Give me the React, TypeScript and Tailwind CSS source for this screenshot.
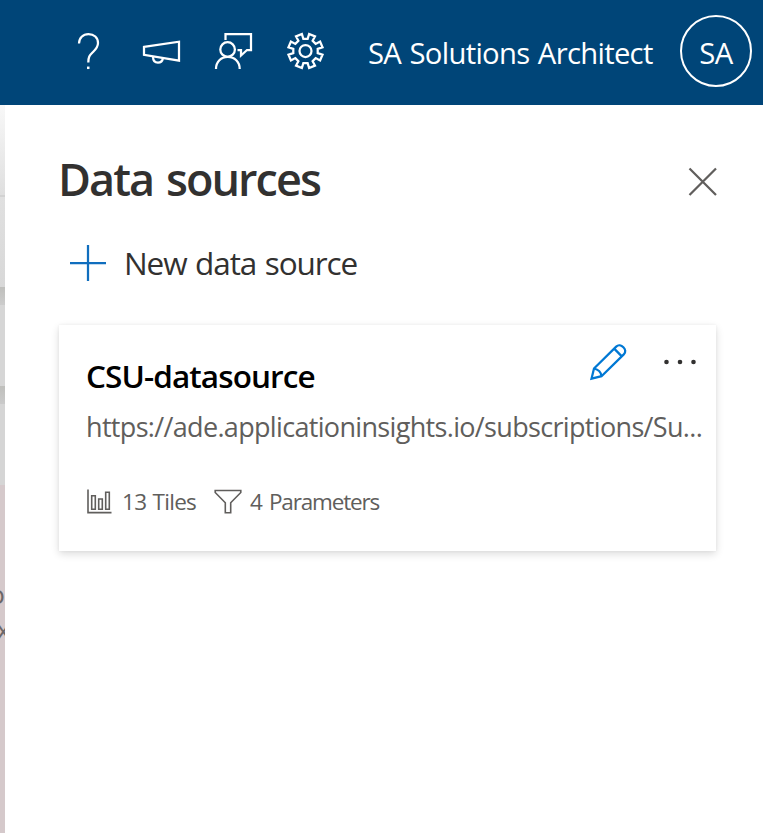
import React from "react";

function gearPath(cx: number, cy: number) {
  const pts: string[] = [];
  for (let i = 0; i < 8; i++) {
    const base = 22.5 + i * 45;
    const corners: [number, number][] = [
      [-12.5, 12.4],
      [-10.5, 17.4],
      [10.5, 17.4],
      [12.5, 12.4],
    ];
    for (const [offset, radius] of corners) {
      const a = ((base + offset) * Math.PI) / 180;
      pts.push(`${(cx + radius * Math.cos(a)).toFixed(2)} ${(cy + radius * Math.sin(a)).toFixed(2)}`);
    }
  }
  return `M${pts.join("L")}Z`;
}

function HelpIcon() {
  return (
    <svg width="24" height="40" viewBox="77 31 24 40" fill="none" stroke="white" strokeWidth="2.25">
      <path d="M79 43.5C79 38 83 34 88.500 34C94 34 98 37.800 98 43C98 47.500 95.500 49.600 92.500 52.500C89.500 55.300 88.300 57 88.300 62.500" />
      <path d="M87 67.800H89.500" strokeWidth="2.500" />
    </svg>
  );
}

function MegaphoneIcon() {
  return (
    <svg width="40" height="40" viewBox="142 31 40 40" fill="none" stroke="white" strokeWidth="2.25">
      <path d="M144 46.900L179 41.700V60.700L144 54.800Z" />
      <path d="M153 56.500C153 60.300 155 62.700 158 62.700C160.800 62.700 162.500 60.800 163 58" />
    </svg>
  );
}

function FeedbackIcon() {
  return (
    <svg width="40" height="40" viewBox="214 31 40 40" fill="none" stroke="white" strokeWidth="2.25">
      <path d="M225.500 40V34H251V50H247L241 55.500V50H237.500" />
      <circle cx="227.600" cy="49.500" r="7.300" />
      <path d="M216 69C216 61.800 221 57 227.800 57C234.600 57 239.700 61.800 239.700 69" />
    </svg>
  );
}

function SettingsIcon() {
  return (
    <svg width="40" height="40" viewBox="286 31 40 40" fill="none" stroke="white" strokeWidth="2.25">
      <path d={gearPath(305.500, 51)} />
      <circle cx="305.500" cy="51" r="6" />
    </svg>
  );
}

function PencilIcon() {
  return (
    <svg width="38" height="38" viewBox="589 343 38 38" fill="none" stroke="#0078d4" strokeWidth="2.25">
      <path d="M591.500 378.700L594 368.500L616.200 346.600C620.500 342.300 628.500 350 623.800 354.400L601.500 376.200Z" />
      <path d="M594 368.500C598.500 369.500 601 372 601.500 376.200M614.200 348.600L621.800 356.400" />
    </svg>
  );
}

function ChartIcon() {
  return (
    <svg width="26" height="26" viewBox="86 489 26 26" fill="none" stroke="#605e5c" strokeWidth="1.600">
      <path d="M88 489.500V512.600H111.500" />
      <path d="M91.700 495.700H95.300V509.300H91.700ZM98.700 499H102.300V509.300H98.700ZM105.700 492.200H109.300V509.300H105.700Z" />
    </svg>
  );
}

function FilterIcon() {
  return (
    <svg width="28" height="26" viewBox="214 489 28 26" fill="none" stroke="#605e5c" strokeWidth="1.600">
      <path d="M215.200 490.500H240.800V492.500L230.700 502.800V512.700H225.300V502.800L215.200 492.500Z" />
    </svg>
  );
}

function TopBar() {
  return (
    <header className="flex h-[105px] shrink-0 items-start bg-[#004578] text-white">
      <div className="ml-[77px] mt-[31px] flex">
        <HelpIcon />
        <div className="ml-[41px]"><MegaphoneIcon /></div>
        <div className="ml-8"><FeedbackIcon /></div>
        <div className="ml-8"><SettingsIcon /></div>
      </div>
      <span className="ml-[42px] mt-[33px] w-[286px] whitespace-nowrap text-[29.25px] leading-[40px] tracking-[-0.7px] [word-spacing:1.5px]">
        SA Solutions Architect
      </span>
      <div className="ml-[26px] mt-[15px] flex size-[72px] shrink-0 items-center justify-center rounded-full border-2 border-white pt-1.5 text-[29.25px] tracking-[-0.5px]">
        SA
      </div>
    </header>
  );
}

function PageBehind() {
  return (
    <aside className="flex w-[5px] shrink-0 flex-col overflow-hidden bg-[#d5c9cb] text-[#6b6769]">
      <div className="h-[90px] shrink-0 bg-linear-to-b from-[#f8f8f8] to-[#dfdfdf]" />
      <div className="h-[2px] shrink-0 bg-[#d2d2d2]" />
      <div className="h-[90px] shrink-0 bg-linear-to-b from-[#e0e0e0] to-[#d8d8d8]" />
      <div className="h-[18px] shrink-0 bg-linear-to-b from-[#bfbfbc] to-[#cccccc]" />
      <div className="h-[81px] shrink-0 bg-[#d6d6d6]" />
      <div className="h-[18px] shrink-0 bg-linear-to-b from-[#bfbfbc] to-[#cacaca]" />
      <div className="h-[81px] shrink-0 bg-[#d5d5d5]" />
      <div className="flex flex-col items-end pt-[92px] text-[26px] leading-[35px]">
        <span>o</span>
        <span className="-mr-[5px]">x</span>
      </div>
    </aside>
  );
}

function DataSourceCard() {
  return (
    <article className="ml-[54px] mt-[39px] h-[226px] w-[657px] bg-white pl-[27px] shadow-[0_3px_8px_rgba(0,0,0,0.14),0_0_3px_rgba(0,0,0,0.05)]">
      <div className="flex pt-[18px]">
        <h2 className="mt-[12px] w-[503px] whitespace-nowrap text-[31.5px] font-semibold leading-[42px] tracking-[-0.9px] text-black">
          CSU-datasource
        </h2>
        <PencilIcon />
        <svg className="ml-[36px]" width="36" height="38" viewBox="663 343 36 38" fill="#323130">
          <circle cx="666.500" cy="362" r="2.300" />
          <circle cx="680" cy="362" r="2.300" />
          <circle cx="693.500" cy="362" r="2.300" />
        </svg>
      </div>
      <p className="mt-[11px] whitespace-nowrap text-[27px] leading-[38px] tracking-[-0.67px] text-[#605e5c]">
        https://ade.applicationinsights.io/subscriptions/Su...
      </p>
      <div className="mt-[39px] flex items-center text-[22.5px] leading-[34px] text-[#605e5c]">
        <ChartIcon />
        <span className="ml-[10px] w-[92px] whitespace-nowrap tracking-[-0.7px] [word-spacing:1px]">13 Tiles</span>
        <FilterIcon />
        <span className="ml-2 whitespace-nowrap tracking-[-1.15px] [word-spacing:2.5px]">4 Parameters</span>
      </div>
    </article>
  );
}

export default function App() {
  return (
    <div className="flex h-[833px] w-[763px] flex-col overflow-hidden bg-white font-['Open_Sans','Noto_Sans',sans-serif]">
      <TopBar />
      <div className="flex grow">
        <PageBehind />
        <main className="grow bg-white">
          <div className="flex items-start pt-[44px]">
            <h1 className="ml-[53px] w-[630px] whitespace-nowrap text-[45px] font-semibold leading-[60px] tracking-[-1.95px] text-[#323130] [word-spacing:3px]">
              Data sources
            </h1>
            <svg className="mt-[18px]" width="30" height="30" viewBox="0 0 30 30" stroke="#605e5c" strokeWidth="2.250">
              <path d="M1.500 1.500L28 28M28 1.500L1.500 28" />
            </svg>
          </div>
          <div className="ml-[65px] mt-[31px] flex h-[46px] items-center">
            <svg width="36" height="36" viewBox="0 0 36 36" stroke="#106ebe" strokeWidth="2.250">
              <path d="M18 0V36M0 18H36" />
            </svg>
            <span className="ml-[18px] whitespace-nowrap text-[31.5px] leading-[42px] tracking-[-1.1px] text-[#323130] [word-spacing:1.5px]">
              New data source
            </span>
          </div>
          <DataSourceCard />
        </main>
      </div>
    </div>
  );
}
